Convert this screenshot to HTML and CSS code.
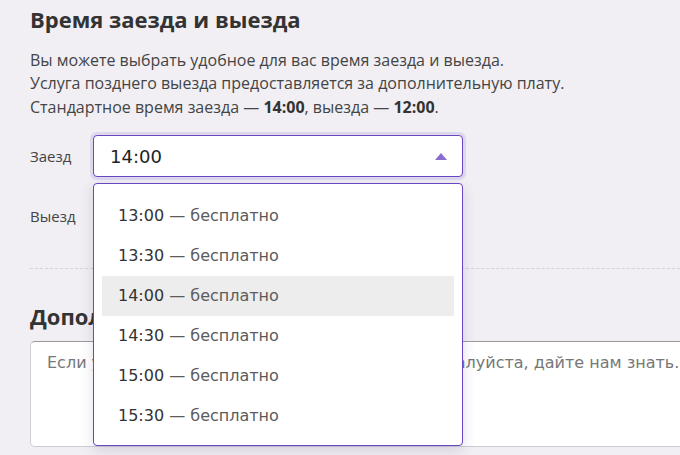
FILE: index.html
```html
<!DOCTYPE html>
<html lang="ru">
<head>
<meta charset="utf-8">
<link rel="stylesheet" href="styles.css">
</head>
<body>
<div class="page">
  <section class="section">
    <h2 class="title">Время заезда и выезда</h2>
    <p class="intro">Вы можете выбрать удобное для вас время заезда и выезда.<br>
    Услуга позднего выезда предоставляется за дополнительную плату.<br>
    Стандартное время заезда — <b>14:00</b>, выезда — <b>12:00</b>.</p>
    <div class="rows">
      <div class="row">
        <span class="label">Заезд</span>
        <div class="select-wrap">
          <div class="select open">
            <span class="value">14:00</span>
            <svg class="arrow" width="12" height="7" viewBox="0 0 12 7"><path d="M0 7 L6 0 L12 7 Z" fill="#8a6cd1"/></svg>
          </div>
          <ul class="menu">
            <li class="opt"><span class="t">13:00</span> <span class="n">— бесплатно</span></li>
            <li class="opt"><span class="t">13:30</span> <span class="n">— бесплатно</span></li>
            <li class="opt active"><span class="t">14:00</span> <span class="n">— бесплатно</span></li>
            <li class="opt"><span class="t">14:30</span> <span class="n">— бесплатно</span></li>
            <li class="opt"><span class="t">15:00</span> <span class="n">— бесплатно</span></li>
            <li class="opt"><span class="t">15:30</span> <span class="n">— бесплатно</span></li>
          </ul>
        </div>
      </div>
      <div class="row">
        <span class="label">Выезд</span>
        <div class="select-wrap">
          <div class="select">
            <span class="value">12:00</span>
          </div>
        </div>
      </div>
    </div>
  </section>
  <hr class="divider">
  <section class="section section-2">
    <h2 class="title">Дополнительные пожелания</h2>
    <div class="textarea">Если у вас есть особые просьбы по номеру, пожалуйста, дайте нам знать.</div>
  </section>
</div>
</body>
</html>
```
FILE: styles.css
```css
html, body {
  margin: 0;
  padding: 0;
  overflow: hidden;
}
body {
  background: #f1eff4;
  font-family: "Open Sans", sans-serif;
  color: #3a3a3a;
  width: 680px;
  height: 455px;
}
.page {
  padding: 0 0 0 30px;
  width: 720px;
}
.title {
  margin: 0;
  padding-top: 4px;
  font-size: 22px;
  line-height: 30px;
  font-weight: 700;
  color: #333;
}
.intro {
  margin: 14.5px 0 0;
  font-size: 16px;
  line-height: 23.5px;
  color: #444;
}
.intro b {
  color: #333;
}
.rows {
  margin-top: 16px;
  display: flex;
  flex-direction: column;
  gap: 18px;
}
.row {
  display: flex;
  align-items: center;
}
.label {
  width: 63px;
  font-size: 15px;
  color: #444;
}
.select-wrap {
  position: relative;
  width: 370px;
}
.select {
  box-sizing: border-box;
  height: 42px;
  background: #fff;
  border: 1px solid #d0cbd9;
  border-radius: 4px;
  display: flex;
  align-items: center;
  justify-content: space-between;
  padding: 0 15px 0 16px;
  font-family: "DejaVu Sans", sans-serif;
  font-size: 18px;
  color: #222;
}
.select.open {
  border-color: #6a47c2;
  box-shadow: 0 0 0 3px rgba(140, 110, 210, 0.18);
}
.menu {
  position: absolute;
  z-index: 5;
  left: 0;
  top: 48px;
  width: 370px;
  box-sizing: border-box;
  margin: 0;
  list-style: none;
  padding: 12px 8px 9px;
  background: #fff;
  border: 1px solid #6a47c2;
  border-radius: 4px;
  box-shadow: 0 4px 14px rgba(60, 40, 110, 0.16);
}
.opt {
  display: block;
  height: 40px;
  line-height: 40px;
  padding-left: 16px;
  font-family: "DejaVu Sans", sans-serif;
  font-size: 16px;
  white-space: nowrap;
}
.opt .t { color: #333; }
.opt .n { color: #5c5c5c; }
.opt.active {
  background: #ededed;
}
.divider {
  margin: 31px 0 0;
  border: 0;
  border-top: 1px dashed #d4d2d8;
  height: 0;
}
.section-2 .title {
  padding-top: 32px;
}
.textarea {
  margin-top: 10px;
  box-sizing: border-box;
  height: 106px;
  width: 700px;
  background: #fff;
  border: 1px solid #cfcdd3;
  border-top-color: #9c9a9f;
  border-radius: 5px;
  padding: 10px 16px;
  font-family: "DejaVu Sans", sans-serif;
  font-size: 16px;
  line-height: 22px;
  color: #777;
  white-space: nowrap;
}
```
